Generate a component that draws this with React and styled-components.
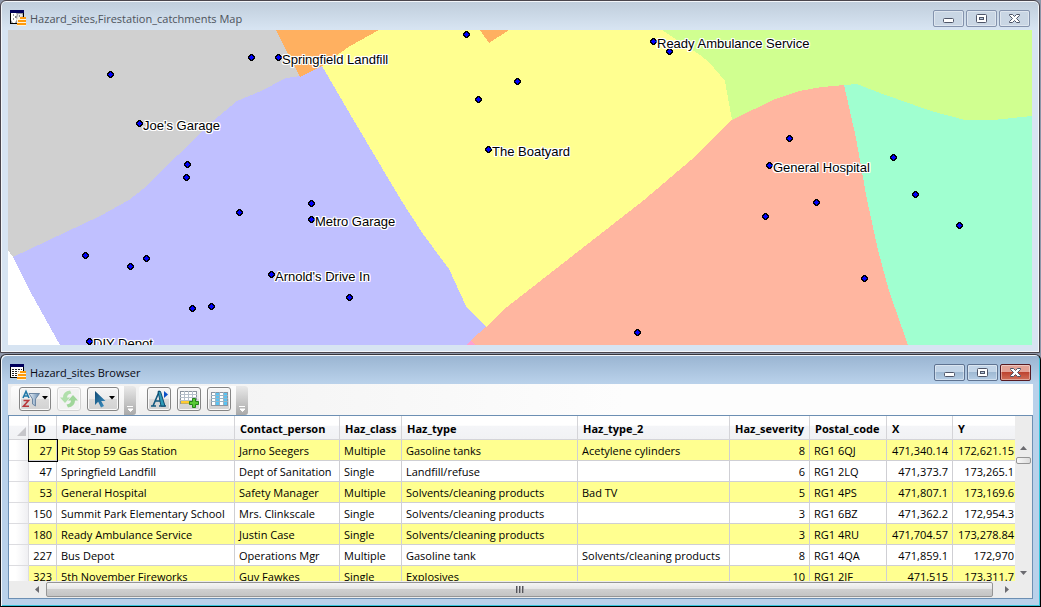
import React from "react";
import styled, { createGlobalStyle, css } from "styled-components";

const UI_FONT = '"Open Sans", "Noto Sans", sans-serif';

const GlobalStyle = createGlobalStyle`
  *, *::before, *::after { box-sizing: border-box; }
  body { margin: 0; background: #8e97a9; font: 11px/16px ${UI_FONT}; color: #000; }
  button { font: inherit; padding: 0; }
`;

const Desktop = styled.main`
  display: flex;
  flex-direction: column;
  gap: 1px;
  height: 100vh;
  min-height: 480px;
`;

/* ---------- window chrome ---------- */

const Frame = styled.section`
  display: flex;
  flex-direction: column;
  border: 1px solid #4a464d;
  border-radius: 6px 6px 0 0;
  padding: 1px 7px 7px;
  overflow: hidden;
  ${(p) =>
    p.$active
      ? css`
          flex: 1;
          min-height: 0;
          border-color: #39363c #000 #000 #1b1b1f;
          background: linear-gradient(#99b4d1, #b9d1ea 28px);
          box-shadow: inset 1px 1px #f4f8fc, inset -1px -1px #35c5dc;
        `
      : css`
          flex: none;
          margin-right: 1px;
          background: linear-gradient(#bfcddb, #d7e4f2 28px);
          box-shadow: inset 0 0 0 1px #f3f6fa;
        `}
`;

const TitleBar = styled.header`
  display: flex;
  align-items: center;
  height: 28px;
  padding: 4px 2px 0;
  flex: none;
`;

const Title = styled.h1`
  flex: 1;
  margin: 0 0 0 4px;
  padding-top: 2px;
  font-size: 11px;
  line-height: 16px;
  font-weight: 400;
  color: ${(p) => (p.$active ? "#0a0a14" : "#4d535b")};
`;

const Caption = styled.div`
  display: flex;
  gap: 2px;
`;

const captionFill = {
  idle: "#c9d6e4",
  active: "linear-gradient(#c3d5e8 0 45%, #9fb9d3 50%, #b5cde5)",
  close: "linear-gradient(#e3a296 0 45%, #bd4430 50%, #d0705a)",
};
const captionEdge = { idle: "#8493ad", active: "#5f7391", close: "#571a22" };

const CaptionButton = styled.button`
  display: grid;
  place-items: center;
  width: 31px;
  height: 17px;
  border: 1px solid ${(p) => captionEdge[p.$tone]};
  border-radius: 2px;
  background: ${(p) => captionFill[p.$tone]};
  box-shadow: inset 0 0 0 1px rgba(255, 255, 255, 0.4);
`;

const Glyph = styled.svg`
  display: block;
  overflow: visible;
`;

const MinimizeGlyph = () => (
  <Glyph width="11" height="11" viewBox="0 0 11 11">
    <rect x="0.5" y="5.5" width="10" height="4" rx="1" fill="#fff" stroke="#4e5568" />
  </Glyph>
);
const RestoreGlyph = () => (
  <Glyph width="11" height="9" viewBox="0 0 11 9">
    <rect x="0.5" y="0.5" width="10" height="8" rx="1" fill="#fff" stroke="#4e5568" />
    <rect x="3.5" y="3.5" width="4" height="2" fill="#b7c9dc" stroke="#4e5568" />
  </Glyph>
);
const CloseGlyph = () => (
  <Glyph width="11" height="9" viewBox="0 0 11 9">
    <path
      d="M.5 .5H3.5L5.5 2.5 7.5 .5H10.5V1.5L7.5 4.5 10.5 7.5V8.5H7.5L5.5 6.5 3.5 8.5H.5V7.5L3.5 4.5 .5 1.5Z"
      fill="#fff"
      stroke="#4e5568"
    />
  </Glyph>
);

const StackBadge = () => (
  <>
    <path d="M9 7h7v9H7v-7z" fill="#fff3da" />
    <path d="M10 7h6v2h-6zM8 10h8v2h-8zM7 13h9v2h-9z" fill="#ff9a0c" />
  </>
);
const MapIcon = () => (
  <Glyph width="16" height="16" viewBox="0 0 16 16">
    <rect x="0.5" y="0.5" width="13" height="13" fill="#98989c" stroke="#000" />
    <rect x="0" y="0" width="14" height="3" fill="#00005c" />
    <path d="M1 3h5l1 2-2 2 2 2-2 4H3l-2-3z" fill="#fff" />
    <path d="M8 4h4l1 2-2 1 1 2-3 1-2-2z" fill="#e8e8ea" />
    <path d="M3 5h1M5 7h1M3 9h1M9 6h1M8 10h1" stroke="#333" fill="none" />
    <StackBadge />
  </Glyph>
);
const BrowserIcon = () => (
  <Glyph width="16" height="16" viewBox="0 0 16 16">
    <rect x="0.5" y="0.5" width="13" height="13" fill="#fff" stroke="#000" />
    <rect x="0" y="0" width="14" height="3" fill="#00005c" />
    <path d="M2 5.5h10M2 7.5h10M2 9.5h8M2 11.5h6" stroke="#222" strokeDasharray="2 1" />
    <StackBadge />
  </Glyph>
);

function AppWindow({ title, icon, active, children }) {
  const tone = active ? "active" : "idle";
  return (
    <Frame $active={active} aria-label={title}>
      <TitleBar>
        {icon}
        <Title $active={active}>{title}</Title>
        <Caption>
          <CaptionButton $tone={tone} aria-label="Minimize"><MinimizeGlyph /></CaptionButton>
          <CaptionButton $tone={tone} aria-label="Restore"><RestoreGlyph /></CaptionButton>
          <CaptionButton $tone={active ? "close" : "idle"} aria-label="Close"><CloseGlyph /></CaptionButton>
        </Caption>
      </TitleBar>
      {children}
    </Frame>
  );
}

/* ---------- map ---------- */

const MAP = { x: 8, y: 30, w: 1024, h: 315 };

const regions = [
  ["#d0d0d0", "8,30 276,30 300,76 286,78 261,91 237,101 213,121 143,189 129,200 100,216 13,257 8,250"],
  ["#c0c0ff", "13,257 100,216 129,200 143,189 213,121 237,101 261,91 286,78 300,76 322,66 350,114 401,200 423,234 449,269 466,306 486,327 471,340 466,345 60,345 45,318 30,291"],
  ["#ffff90", "322,66 350,46 379,30 662,30 700,55 709,62 725,81 728,98 732,120 691,160 644,200 507,307 486,327 466,306 449,269 423,234 401,200 350,114"],
  ["#ffb060", "276,30 379,30 350,46 322,66 300,77"],
  ["#ffb060", "480,30 509,30 489,43"],
  ["#d0ff90", "662,30 1032,30 1032,116 993,120 965,120 931,111 880,93 857,84 844,85 822,87 799,91 773,100 732,120 728,98 725,81 709,62 700,55"],
  ["#ffb6a0", "732,120 773,100 799,91 822,87 844,85 856,138 867,200 878,250 889,291 908,345 475,345 471,340 486,327 507,307 644,200 691,160"],
  ["#a0ffd0", "844,85 857,84 880,93 931,111 965,120 993,120 1032,116 1032,345 908,345 889,291 878,250 867,200 856,138"],
  ["#ffa0d0", "466,345 471,340 475,345"],
];

const sites = [
  [110, 74], [251, 57], [278, 57, "Springfield Landfill"], [139, 123, "Joe's Garage"],
  [187, 164], [186, 177], [239, 212], [311, 203], [311, 219, "Metro Garage"],
  [85, 255], [130, 266], [146, 258], [271, 274, "Arnold's Drive In"], [349, 297],
  [192, 308], [211, 306], [89, 341, "DIY Depot"], [466, 34], [517, 81], [478, 99],
  [488, 149, "The Boatyard"], [669, 51], [653, 41, "Ready Ambulance Service"],
  [789, 138], [769, 165, "General Hospital"], [816, 202], [765, 216], [893, 157],
  [915, 194], [959, 225], [864, 278], [637, 332],
];

const MapCanvas = styled.div`
  position: relative;
  height: 315px;
  overflow: hidden;
  background: #fff;
`;

const RegionLayer = styled.svg`
  display: block;
  width: 100%;
  height: 100%;
`;

const Pin = styled.div`
  position: absolute;
  display: flex;
  align-items: flex-start;
  margin: -3px 0 0 -3px;
`;

const PinLabel = styled.span`
  margin-top: -2px;
  white-space: nowrap;
  font: 13px/15px "Liberation Sans", Arial, sans-serif;
  text-shadow: 1px 0 #fff, -1px 0 #fff, 0 1px #fff, 0 -1px #fff, 1px 1px #fff, -1px -1px #fff,
    1px -1px #fff, -1px 1px #fff, 0 0 2px #fff;
`;

const PinMarker = () => (
  <Glyph width="7" height="7" viewBox="0 0 7 7" shapeRendering="crispEdges">
    <path d="M2 0h3v1h1v1h1v3h-1v1h-1v1h-3v-1h-1v-1h-1v-3h1v-1h1z" fill="#000" />
    <path d="M3 1h1v1h1v1h1v1h-1v1h-1v1h-1v-1h-1v-1h-1v-1h1v-1h1z" fill="#00f" />
    <path d="M2 2h3v3h-3z" fill="#00f" />
  </Glyph>
);

function SiteMap() {
  return (
    <MapCanvas>
      <RegionLayer
        viewBox={`${MAP.x} ${MAP.y} ${MAP.w} ${MAP.h}`}
        preserveAspectRatio="none"
        shapeRendering="crispEdges"
        role="img"
        aria-label="Fire station catchments"
      >
        {regions.map(([fill, points]) => (
          <polygon key={points} fill={fill} points={points} />
        ))}
      </RegionLayer>
      {sites.map(([x, y, label]) => (
        <Pin
          key={`${x}-${y}`}
          style={{ left: `${((x - MAP.x) / MAP.w) * 100}%`, top: `${((y - MAP.y) / MAP.h) * 100}%` }}
        >
          <PinMarker />
          {label && <PinLabel>{label}</PinLabel>}
        </Pin>
      ))}
    </MapCanvas>
  );
}

/* ---------- toolbar ---------- */

const Toolbar = styled.div`
  display: flex;
  gap: 3px;
  flex: none;
  height: 31px;
  padding: 2px 0 0 3px;
  background: linear-gradient(90deg, #efefef, #fdfdfd 60%);
`;

const ToolGroup = styled.div`
  display: flex;
  border-radius: 3px;
  overflow: hidden;
  background: linear-gradient(#fdfdfd, #ededed);
`;

const ToolList = styled.div`
  display: flex;
  gap: 6px;
  padding: 1px 5px 0 8px;
`;

const ToolButton = styled.button`
  display: flex;
  align-items: center;
  justify-content: center;
  gap: 2px;
  width: ${(p) => (p.$menu ? 32 : 24)}px;
  height: 24px;
  border: 1px solid #858585;
  border-radius: 3px;
  background: linear-gradient(#f6f6f6, #ebebeb 50%, #dadada 52%, #d2d2d2);
  box-shadow: inset 0 0 0 1px #fafafa;

  &:disabled {
    border-color: #d3d3d3;
    background: #f2f2f2;
  }
`;

const Overflow = styled.button`
  display: flex;
  align-items: flex-end;
  justify-content: center;
  width: 12px;
  padding-bottom: 2px;
  border: 0;
  background: linear-gradient(#e9e9e9, #a9a9a9);
`;

const Caret = () => (
  <Glyph width="6" height="8" viewBox="0 0 6 8">
    <path d="M0 1h6L3 4.500z" fill="#000" />
  </Glyph>
);
const OverflowGlyph = () => (
  <Glyph width="7" height="7" viewBox="0 0 7 7">
    <path d="M0 .5h6M1 3h5L3.500 5.500z" stroke="#fff" fill="#fff" />
  </Glyph>
);
const SortFilterIcon = () => (
  <Glyph width="18" height="18" viewBox="0 0 18 18">
    <defs>
      <linearGradient id="funnel">
        <stop offset="0" stopColor="#f1f6fb" />
        <stop offset="1" stopColor="#5f86ad" />
      </linearGradient>
    </defs>
    <path d="M1 8L4 1.500 7 8M2.500 6h3.500" fill="none" stroke="#2178a8" strokeWidth="1.600" />
    <path d="M1.500 10.500h5L1.500 16.200h5.500" fill="none" stroke="#b8383c" strokeWidth="1.600" />
    <path d="M7 3.500h10.500L13.500 9v7l-3-2V9z" fill="url(#funnel)" stroke="#6d87a3" />
  </Glyph>
);
const RefreshIcon = () => (
  <Glyph width="18" height="18" viewBox="0 0 18 18">
    <path d="M0 7.500H3Q3 1.500 10 .5L11.500 3.500Q7 4 7 7.500H10L5 13z" fill="#b0dfab" />
    <path d="M0 7.500H3Q3 1.500 10 .5L11.500 3.500Q7 4 7 7.500H10L5 13z" fill="#a0d69a" transform="rotate(180 9 9)" />
  </Glyph>
);
const PointerIcon = () => (
  <Glyph width="16" height="18" viewBox="0 0 16 18">
    <defs>
      <linearGradient id="arrow" x2="1" y2="1">
        <stop offset="0" stopColor="#0f4a74" />
        <stop offset="1" stopColor="#3f93c6" />
      </linearGradient>
    </defs>
    <path d="M4 1v14l3.200-3.200 2.800 5.700 3-1.500-2.800-5H14.500z" fill="url(#arrow)" />
  </Glyph>
);
const FontIcon = () => (
  <Glyph width="19" height="18" viewBox="0 0 19 18">
    <path d="M1 16h5M9 16h7M3 16L9 2l5 14M5 11h7" fill="none" stroke="#12587f" strokeWidth="1.600" />
    <path d="M8 1.500h2.500L15 16h-4z" fill="#2f9bb8" stroke="#0f4c70" />
    <path d="M14 1l4 3.500-4 3.500z" fill="#0b50c8" />
  </Glyph>
);
const AddRowIcon = () => (
  <Glyph width="19" height="18" viewBox="0 0 19 18">
    <rect x="0.500" y="1.500" width="16" height="12" fill="#fff" stroke="#8b949f" />
    <path d="M0 4.500h17M0 7.500h17M0 10.500h17M4.500 1v12M8.500 1v12M12.500 1v12" stroke="#b5bfca" />
    <path d="M1 11h15v2.500H1z" fill="#ffcb31" />
    <path d="M12.500 8.500h3v3h3v3h-3v3h-3v-3h-3v-3h3z" fill="#59c936" stroke="#24831a" />
  </Glyph>
);
const ColumnsIcon = () => (
  <Glyph width="17" height="16" viewBox="0 0 17 16">
    <rect x="0.500" y="1.500" width="16" height="13" fill="#fff" stroke="#8b949f" />
    <path d="M4 2h4v12H4zM12 2h4v12h-4z" fill="#58c3f3" />
    <path d="M0 4.500h17M0 7.500h17M0 10.500h17M4.500 1v13M8.500 1v13M12.500 1v13" stroke="#98b4c6" />
  </Glyph>
);

const BrowserToolbar = () => (
  <Toolbar role="toolbar" aria-label="Browser tools">
    <ToolGroup>
      <ToolList>
        <ToolButton $menu aria-label="Sort and filter"><SortFilterIcon /><Caret /></ToolButton>
        <ToolButton disabled aria-label="Refresh"><RefreshIcon /></ToolButton>
        <ToolButton $menu aria-label="Select"><PointerIcon /><Caret /></ToolButton>
      </ToolList>
      <Overflow aria-label="More tools"><OverflowGlyph /></Overflow>
    </ToolGroup>
    <ToolGroup>
      <ToolList>
        <ToolButton aria-label="Text style"><FontIcon /></ToolButton>
        <ToolButton aria-label="Add row"><AddRowIcon /></ToolButton>
        <ToolButton aria-label="Pick fields"><ColumnsIcon /></ToolButton>
      </ToolList>
      <Overflow aria-label="More tools"><OverflowGlyph /></Overflow>
    </ToolGroup>
  </Toolbar>
);

/* ---------- data grid ---------- */

const columns = [
  { name: "ID", width: 28, numeric: true },
  { name: "Place_name", width: 178 },
  { name: "Contact_person", width: 105 },
  { name: "Haz_class", width: 62 },
  { name: "Haz_type", width: 176 },
  { name: "Haz_type_2", width: 152 },
  { name: "Haz_severity", width: 80, numeric: true },
  { name: "Postal_code", width: 77 },
  { name: "X", width: 66, numeric: true },
  { name: "Y", width: 66, numeric: true },
];

const rows = [
  ["27", "Pit Stop 59 Gas Station", "Jarno Seegers", "Multiple", "Gasoline tanks", "Acetylene cylinders", "8", "RG1 6QJ", "471,340.14", "172,621.15"],
  ["47", "Springfield Landfill", "Dept of Sanitation", "Single", "Landfill/refuse", "", "6", "RG1 2LQ", "471,373.7", "173,265.1"],
  ["53", "General Hospital", "Safety Manager", "Multiple", "Solvents/cleaning products", "Bad TV", "5", "RG1 4PS", "471,807.1", "173,169.6"],
  ["150", "Summit Park Elementary School", "Mrs. Clinkscale", "Single", "Solvents/cleaning products", "", "3", "RG1 6BZ", "471,362.2", "172,954.3"],
  ["180", "Ready Ambulance Service", "Justin Case", "Single", "Solvents/cleaning products", "", "3", "RG1 4RU", "471,704.57", "173,278.84"],
  ["227", "Bus Depot", "Operations Mgr", "Multiple", "Gasoline tank", "Solvents/cleaning products", "8", "RG1 4QA", "471,859.1", "172,970"],
  ["323", "5th November Fireworks", "Guy Fawkes", "Single", "Explosives", "", "10", "RG1 2JF", "471,515", "173,311.7"],
];

const GridPanel = styled.div`
  display: flex;
  flex-direction: column;
  flex: 1;
  min-height: 0;
  border: 1px solid #6c8fb3;
  background: #efefef;
`;

const GridBody = styled.div`
  display: flex;
  flex: 1;
  min-height: 0;
`;

const Viewport = styled.div`
  flex: 1;
  min-width: 0;
  overflow: hidden;
  background: #fff;
`;

const Table = styled.table`
  width: 100%;
  table-layout: fixed;
  border-collapse: separate;
  border-spacing: 0;
`;

const HeadCell = styled.th`
  height: 24px;
  padding: 2px 0 0 5px;
  text-align: left;
  white-space: nowrap;
  font-weight: 700;
  font-size: 11px;
  line-height: 16px;
  border: solid #d4d4d8;
  border-width: 0 1px 1px 0;
  background: linear-gradient(#fff 0 40%, #f4f5f8 45%, #f1f2f4);
`;

const CornerCell = styled(HeadCell)`
  padding: 8px 2px 0 0;
  vertical-align: middle;
`;

const CornerMark = styled(Glyph)`
  margin-left: auto;
`;

const Cell = styled.td`
  height: 21px;
  padding: 2px 4px 0;
  white-space: nowrap;
  line-height: 16px;
  text-align: ${(p) => (p.$numeric ? "right" : "left")};
  border: solid #cfcfd4;
  border-width: 0 1px 1px 0;
  ${(p) =>
    p.$current &&
    css`
      outline: 1px solid #000;
    `}
`;

const RowHead = styled.td`
  border: solid #dcdce0;
  border-width: 0 1px 1px 0;
  background: linear-gradient(90deg, #fff 35%, #efeff2);
`;

const Row = styled.tr`
  background: #fff;
  &:nth-child(odd) {
    background: #ffff90;
  }
`;

const VScroll = styled.div`
  display: flex;
  flex-direction: column;
  width: 17px;
  padding-top: 24px;
  background: #ececec;
`;

const HScroll = styled.div`
  display: flex;
  flex: none;
  height: 17px;
  padding: 0 17px 0 20px;
  background: #ececec;
`;

const ArrowButton = styled.button`
  display: grid;
  place-items: center;
  width: 17px;
  height: 17px;
  flex: none;
  border: 0;
  background: none;
`;

const Thumb = styled.div`
  display: grid;
  place-items: center;
  border: 1px solid #959595;
  border-radius: 2px;
  ${(p) =>
    p.$vertical
      ? css`
          height: 7px;
          margin: 0 1px;
          background: linear-gradient(90deg, #f8f8f8, #dcdcdc);
        `
      : css`
          flex: 1;
          margin: 1px 5px 1px 0;
          background: linear-gradient(#f5f5f5, #e6e6e6 45%, #cfcfcf 50%, #c4c4c4);
        `}
`;

const Spacer = styled.div`
  flex: 1;
`;

const Arrow = ({ d }) => (
  <Glyph width="7" height="7" viewBox="0 0 7 7">
    <path d={d} fill="#6b6b70" />
  </Glyph>
);

const DataGrid = () => (
  <GridPanel>
    <GridBody>
      <Viewport>
        <Table>
          <colgroup>
            <col width={20} />
            {columns.map((c) => (
              <col key={c.name} width={c.width} />
            ))}
          </colgroup>
          <thead>
            <tr>
              <CornerCell as="td">
                <CornerMark width="9" height="9" viewBox="0 0 9 9">
                  <path d="M9 0v9H0z" fill="#c6c6ca" />
                </CornerMark>
              </CornerCell>
              {columns.map((c) => (
                <HeadCell key={c.name} scope="col">{c.name}</HeadCell>
              ))}
            </tr>
          </thead>
          <tbody>
            {rows.map((row, r) => (
              <Row key={row[0]}>
                <RowHead />
                {row.map((value, i) => (
                  <Cell key={columns[i].name} $numeric={columns[i].numeric} $current={r === 0 && i === 0}>
                    {value}
                  </Cell>
                ))}
              </Row>
            ))}
          </tbody>
        </Table>
      </Viewport>
      <VScroll>
        <ArrowButton aria-label="Scroll up"><Arrow d="M0 5h7L3.500 1z" /></ArrowButton>
        <Thumb $vertical />
        <Spacer />
        <ArrowButton aria-label="Scroll down"><Arrow d="M0 2h7L3.500 6z" /></ArrowButton>
      </VScroll>
    </GridBody>
    <HScroll>
      <ArrowButton aria-label="Scroll left"><Arrow d="M5 0v7L1 3.500z" /></ArrowButton>
      <Thumb>
        <Glyph width="8" height="7" viewBox="0 0 8 7">
          <path d="M.5 0v7M3.500 0v7M6.500 0v7" stroke="#55555a" />
          <path d="M1.500 0v7M4.500 0v7M7.500 0v7" stroke="#a0a0a4" />
        </Glyph>
      </Thumb>
      <ArrowButton aria-label="Scroll right"><Arrow d="M2 0v7L6 3.500z" /></ArrowButton>
    </HScroll>
  </GridPanel>
);

export default function App() {
  return (
    <>
      <GlobalStyle />
      <Desktop>
        <AppWindow title="Hazard_sites,Firestation_catchments Map" icon={<MapIcon />}>
          <SiteMap />
        </AppWindow>
        <AppWindow title="Hazard_sites Browser" icon={<BrowserIcon />} active>
          <BrowserToolbar />
          <DataGrid />
        </AppWindow>
      </Desktop>
    </>
  );
}
